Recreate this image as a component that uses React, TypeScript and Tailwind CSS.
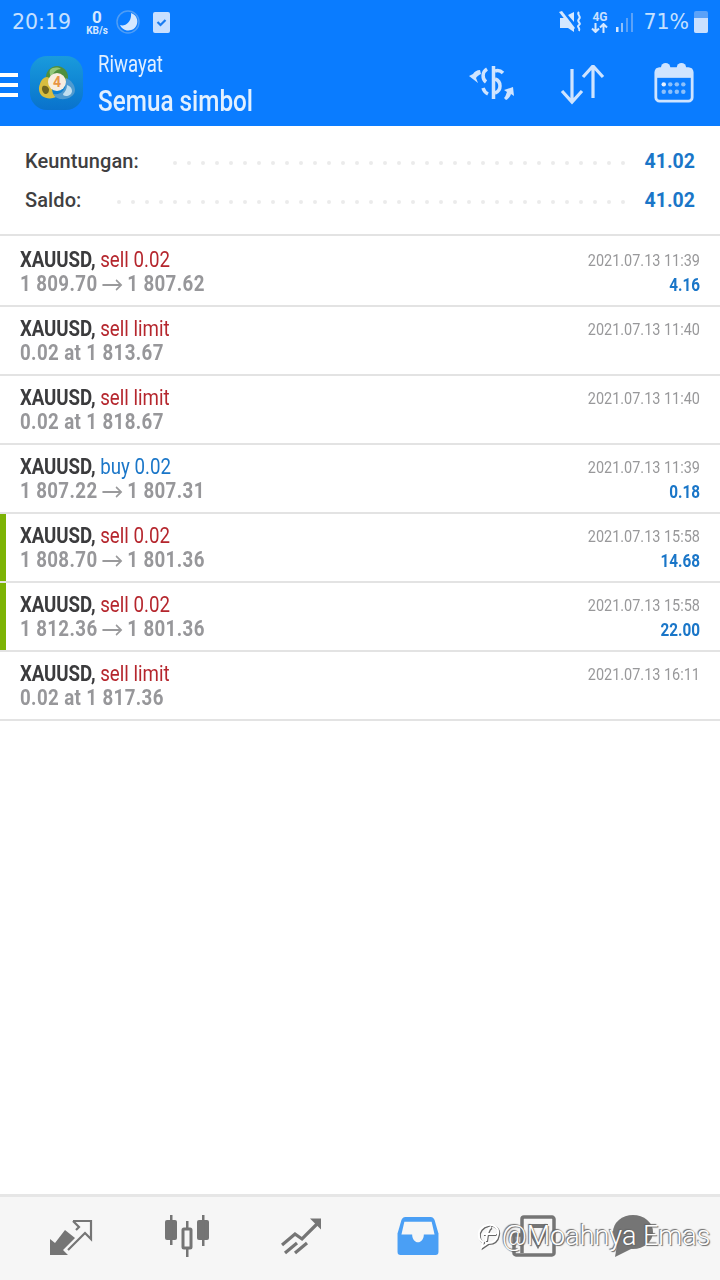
import React from "react";

const font = { fontFamily: "Roboto, sans-serif" };

type Row = { kind: string; kindColor: string; line2: string | string[]; time: string; profit?: string; mark?: boolean };

const Arrow = () => (
  <svg width="25" height="14" viewBox="0 0 25 14" className="inline-block mx-[5px] align-[-1px]" fill="none" stroke="#9a9a9c" strokeWidth="1.8">
    <path d="M1 7H23M17 2l6 5-6 5" />
  </svg>
);

const rows: Row[] = [
  { kind: "sell 0.02", kindColor: "text-[#b5262d]", line2: ["1 809.70", "1 807.62"], time: "2021.07.13 11:39", profit: "4.16" },
  { kind: "sell limit", kindColor: "text-[#b5262d]", line2: "0.02 at 1 813.67", time: "2021.07.13 11:40" },
  { kind: "sell limit", kindColor: "text-[#b5262d]", line2: "0.02 at 1 818.67", time: "2021.07.13 11:40" },
  { kind: "buy 0.02", kindColor: "text-[#1a76c8]", line2: ["1 807.22", "1 807.31"], time: "2021.07.13 11:39", profit: "0.18" },
  { kind: "sell 0.02", kindColor: "text-[#b5262d]", line2: ["1 808.70", "1 801.36"], time: "2021.07.13 15:58", profit: "14.68", mark: true },
  { kind: "sell 0.02", kindColor: "text-[#b5262d]", line2: ["1 812.36", "1 801.36"], time: "2021.07.13 15:58", profit: "22.00", mark: true },
  { kind: "sell limit", kindColor: "text-[#b5262d]", line2: "0.02 at 1 817.36", time: "2021.07.13 16:11" },
];

function TradeRow({ r, first }: { r: Row; first: boolean }) {
  return (
    <div className={`relative border-b-2 border-[#e3e3e3] pl-5 pr-5 flex justify-between ${first ? "h-[71px] pt-[12px]" : "h-[69px] pt-[10px]"}`}>
      {r.mark && <div className="absolute left-0 top-0 bottom-0 w-[6px] bg-[#7cb305]" />}
      <div className="origin-left scale-x-[0.85] whitespace-nowrap">
        <div className="text-[22px] leading-[24px] text-[#3b3b3d]">
          <span className="font-bold tracking-[-0.1px]">XAUUSD,</span> <span className={r.kindColor}>{r.kind}</span>
        </div>
        <div className="text-[22px] leading-[24px] font-bold text-[#97979a] tracking-[0.45px]">
          {Array.isArray(r.line2) ? (
            <>
              {r.line2[0]}
              <Arrow />
              {r.line2[1]}
            </>
          ) : (
            r.line2
          )}
        </div>
      </div>
      <div className="text-right whitespace-nowrap origin-right scale-x-[0.85]">
        <div className="text-[17px] leading-[22px] mt-[1px] text-[#98989a]">{r.time}</div>
        {r.profit && <div className="text-[18px] leading-[24px] font-bold text-[#1a76c8] mt-[2px]">{r.profit}</div>}
      </div>
    </div>
  );
}

function Dots() {
  return (
    <div className="flex-1 ml-[34px] mr-[20px] h-[4px] mt-[3px] overflow-hidden flex justify-end gap-[10px]">
      {Array.from({ length: 40 }).map((_, i) => (
        <span key={i} className="w-[4px] h-[4px] rounded-full bg-[#ebebeb] shrink-0" />
      ))}
    </div>
  );
}

function Logo() {
  return (
    <div className="w-[53px] h-[54px] rounded-[17px] bg-gradient-to-b from-[#1a9bdc] to-[#0a72cc] flex items-center justify-center shrink-0">
      <svg width="38" height="36" viewBox="0 0 38 36">
        <path d="M19 1c6 0 11 5 11 11 0 2-1 4-2 5H11c-2-1-3-3-3-5C8 6 13 1 19 1z" fill="#4f8f3e" />
        <path d="M12 5c3-3 8-3 11-1-4 0-8 3-9 8-2-1-3-4-2-7z" fill="#93c77a" />
        <path d="M9 12c4 1 6 5 5 11 0 4 1 7 4 9-4 2-10 2-14-1-3-3-4-8-2-12 1-4 4-7 7-7z" fill="#d8bd3f" />
        <path d="M5 21c2-1 5 0 6 3 0 3-1 5-4 5-3-2-4-6-2-8z" fill="#6f6520" />
        <path d="M28 13c5 2 9 7 9 12 0 6-7 10-15 9-4-1-6-3-6-5 6 1 13-3 12-16z" fill="#4f9bd0" />
        <path d="M29 20c3 1 5 3 5 6s-3 5-6 5c-2 0-3-1-3-2 2-2 4-5 4-9z" fill="#c0dff0" />
        <circle cx="19" cy="17" r="9" fill="#f7ede0" />
        <text x="19" y="22" textAnchor="middle" fontSize="14" fontWeight="700" fill="#e89445" fontFamily="Roboto, sans-serif">4</text>
      </svg>
    </div>
  );
}

export default function App() {
  return (
    <div className="w-[720px] h-[1280px] bg-white flex flex-col overflow-hidden" style={font}>
      <header className="h-[126px] bg-[#0a7cff] shrink-0 text-[#e2f0ff] relative">
        <div className="h-[44px] flex items-center justify-between pl-[12px] pr-[12px]">
          <div className="flex items-center">
            <span className="text-[20.5px] text-[#c5e0ff] w-[62px]" style={{ fontFamily: "'DejaVu Sans', sans-serif" }}>20:19</span>
            <div className="ml-[10px] flex flex-col items-center w-[26px] text-[#d5e8ff]">
              <span className="text-[17px] leading-[17px] font-bold">0</span>
              <span className="text-[10px] leading-[10px] font-bold">KB/s</span>
            </div>
            <svg width="24" height="24" viewBox="0 0 24 24" className="ml-[6px]">
              <circle cx="12" cy="12" r="11" fill="none" stroke="#4f9df5" strokeWidth="1.5" />
              <path d="M15 3a9 9 0 1 1-11 12c5 2 12-3 11-12z" fill="#d5e8ff" />
            </svg>
            <div className="ml-[13px] w-[17px] h-[21px] bg-[#c9e0ff] rounded-[2px] flex items-center justify-center">
              <svg width="13" height="13" viewBox="0 0 13 13" fill="none" stroke="#1a7cf0" strokeWidth="2.2"><path d="M2.500 6l3 3 5-5" /></svg>
            </div>
          </div>
          <div className="flex items-center text-[#c9e0ff]">
            <svg width="24" height="24" viewBox="0 0 24 24" fill="#d5e8ff" className="mr-[9px]">
              <path d="M2 8h4l1-1 9 11v4l-6-4H2z" />
              <path d="M10 5l6-3v10z" />
              <path d="M1 2l3-1 13 17-2 2z" fill="#d5e8ff" />
              <path d="M21 2c-3 3 3 4 0 7s3 4 0 6 2 3 0 6" fill="none" stroke="#d5e8ff" strokeWidth="2" />
            </svg>
            <div className="flex flex-col items-center w-[17px]">
              <span className="text-[12px] leading-[12px] font-bold">4G</span>
              <svg width="17" height="10" viewBox="0 0 17 10" fill="none" stroke="#d5e8ff" strokeWidth="2">
                <path d="M4.500 0v9M1 5.500l3.500 3.500L8 5.500M12.500 10V1M9 4.500L12.500 1 16 4.500" />
              </svg>
            </div>
            <svg width="20" height="22" viewBox="0 0 20 22" className="ml-[7px]">
              <rect x="1" y="16" width="2.500" height="5" fill="#d5e8ff" />
              <rect x="6" y="12" width="2" height="9" fill="#8fc0f8" />
              <rect x="11" y="7" width="2" height="14" fill="#5ba2f8" />
              <rect x="16" y="2" width="2" height="19" fill="#5ba2f8" />
            </svg>
            <span className="ml-[8px] text-[20.5px] text-[#c5e0ff]" style={{ fontFamily: "'DejaVu Sans', sans-serif" }}>71%</span>
            <div className="ml-[5px] w-[14px] h-[22px] relative rounded-[2px] overflow-hidden bg-[#5ba2f8] mt-[-1px]">
              <div className="absolute bottom-0 left-0 right-0 h-[15px] bg-[#c9e0ff]" />
            </div>
          </div>
        </div>
        <div className="h-[82px] flex items-start relative">
          <div className="mt-[29px] w-[18px] flex flex-col gap-[6px] shrink-0">
            <span className="h-[4px] bg-white block" />
            <span className="h-[4px] bg-white block" />
            <span className="h-[4px] bg-white block" />
          </div>
          <div className="ml-[12px] mt-[12px]"><Logo /></div>
          <div className="ml-[15px] mt-[6px] origin-left scale-x-[0.81] whitespace-nowrap">
            <div className="text-[23px] leading-[30px]">Riwayat</div>
            <div className="text-[30px] leading-[42px] font-medium">Semua simbol</div>
          </div>
          <div className="ml-auto flex items-start text-[#cfe4ff]">
            <svg width="60" height="55" viewBox="0 0 60 55" className="mr-[36px] mt-[11px]" fill="none" stroke="#cfe4ff">
              <path d="M29.500 11V44" strokeWidth="3.500" />
              <path d="M31 16c3-1 6 0 8 2" strokeWidth="3.500" />
              <path d="M23 14c-5 3-5 10-1 13" strokeWidth="3.500" />
              <path d="M19 33c1 3 3 5 5 6" strokeWidth="3.500" />
              <path d="M31 24c3 1 5 3 5 7s-2 6-5 7" strokeWidth="3.500" />
              <path d="M5 21l4-2c1-2 4-4 7-4l1 4c-2 1-4 2-5 4l2 5z" fill="#cfe4ff" stroke="none" />
              <path d="M40 43c2-2 2-4 3-6l-3-2 9-3 1 9-3-2c-1 3-3 5-5 6z" fill="#cfe4ff" stroke="none" />
            </svg>
            <svg width="46" height="40" viewBox="0 0 46 40" className="mr-[48px] mt-[21px]" fill="none" stroke="#cfe4ff" strokeWidth="3.200">
              <path d="M12 4v33M2 26l10 11 10-11" />
              <path d="M33 33V1M23 12L33 1l10 11" />
            </svg>
            <svg width="40" height="41" viewBox="0 0 42 44" className="mr-[26px] mt-[18px]">
              <rect x="1.500" y="7" width="39" height="35" rx="4" fill="none" stroke="#cfe4ff" strokeWidth="3" />
              <rect x="1.500" y="7" width="39" height="10" fill="#cfe4ff" />
              <circle cx="12" cy="6" r="5" fill="#cfe4ff" />
              <circle cx="29" cy="6" r="5" fill="#cfe4ff" />
              {[10, 17, 24, 31].map((x) => (
                <React.Fragment key={x}>
                  <circle cx={x} cy="24" r="2.400" fill={x === 10 ? "#e6f1ff" : "#8cc0fb"} />
                  <circle cx={x} cy="32" r="2.400" fill="#8cc0fb" />
                </React.Fragment>
              ))}
            </svg>
          </div>
        </div>
      </header>

      <section className="h-[110px] border-b-2 border-[#e3e3e3] pl-[25px] pr-[25px] pt-[23px] shrink-0">
        <div className="h-[24px] flex items-center text-[20px]">
          <span className="font-medium text-[#3f3f41] tracking-[0.1px]">Keuntungan:</span>
          <Dots />
          <span className="font-bold text-[#1a76c8] text-[19.5px] mt-[1px]">41.02</span>
        </div>
        <div className="h-[24px] flex items-center text-[20px] mt-[15px]">
          <span className="font-medium text-[#3f3f41] tracking-[0.1px]">Saldo:</span>
          <Dots />
          <span className="font-bold text-[#1a76c8] text-[19.5px] mt-[1px]">41.02</span>
        </div>
      </section>

      <main className="flex-1">
        {rows.map((r, i) => (
          <TradeRow key={i} r={r} first={i === 0} />
        ))}
      </main>

      <footer className="h-[86px] shrink-0 border-t-[3px] border-[#e6e6e6] bg-[#f6f6f6] relative flex items-start">
        <svg width="44" height="38" viewBox="0 0 44 38" className="absolute left-[50px] top-[21px]">
          <path d="M0 37V21l5 4L15 12l10 8L13 32l5 5z" fill="#757575" />
          <path d="M23 3h18v18l-6-6-17 17M23 3l6 6-3 3" fill="none" stroke="#757575" strokeWidth="2.200" />
        </svg>
        <svg width="46" height="44" viewBox="0 0 46 44" className="absolute left-[164px] top-[18px]">
          <rect x="1" y="5" width="12" height="20" rx="2" fill="#757575" />
          <rect x="6" y="0" width="2.500" height="30" fill="#757575" />
          <rect x="33" y="5" width="12" height="20" rx="2" fill="#757575" />
          <rect x="38" y="0" width="2.500" height="31" fill="#757575" />
          <rect x="19" y="14" width="8" height="19" rx="1" fill="none" stroke="#757575" strokeWidth="3" />
          <rect x="22" y="6" width="2.500" height="8" fill="#757575" />
          <rect x="22" y="33" width="2.500" height="9" fill="#757575" />
        </svg>
        <svg width="42" height="40" viewBox="0 0 42 40" className="absolute left-[281px] top-[20px]" fill="none" stroke="#757575" strokeWidth="3.200">
          <path d="M1 28l13-11 7 5L38 5" />
          <path d="M29 1.500h11v11z" fill="#757575" stroke="none" />
          <path d="M4 36l12-10M14 36l12-10" />
        </svg>
        <svg width="42" height="38" viewBox="0 0 42 39" className="absolute left-[397px] top-[20px]">
          <path d="M8 0h26c2 0 3 1 4 3l4 14v19c0 2-1 3-3 3H3c-2 0-3-1-3-3V17L4 3c1-2 2-3 4-3z" fill="#4a9ff5" />
          <path d="M7 5h28l3 13H27c0 5-3 8-6 8s-6-3-6-8H4z" fill="#f6f6f6" />
        </svg>
        <svg width="44" height="42" viewBox="0 0 44 42" className="absolute left-[512px] top-[18px]" fill="none" stroke="#757575" strokeWidth="3.500">
          <path d="M10 38V4c0-1.500 1-2 2-2h28c1 0 2 1 2 2v34c0 1-1 2-2 2H4c-1 0-2-1-2-2V20h8" />
          <path d="M17 11h19" strokeWidth="4" />
          <path d="M18 16l8 15 8-15" strokeWidth="3" />
        </svg>
        <svg width="42" height="42" viewBox="0 0 42 42" className="absolute left-[612px] top-[18px]">
          <ellipse cx="21" cy="17" rx="20" ry="17" fill="#757575" />
          <path d="M6 24L3 42l18-9z" fill="#757575" />
        </svg>
        <div
          className="absolute left-[477px] top-[21px] text-[27px] leading-[36px] font-light text-white whitespace-nowrap flex items-center"
          style={{ textShadow: "1px 1px 1px #666, -1px -1px 1px #666" }}
        >
          <svg width="24" height="28" viewBox="0 0 24 28" fill="none" stroke="#fff" strokeWidth="2" className="mr-[1px]" style={{ filter: "drop-shadow(1px 1px 0 #666)" }}>
            <path d="M21 12c1-6-4-10-10-9C5 4 1 9 2 14c0 3 2 5 4 6l-1 5 6-4c5 0 9-3 10-9z" />
            <path d="M6 12h13M14 5c-3 1-4 5-5 14" />
          </svg>
          @Moahnya Emas
        </div>
      </footer>
    </div>
  );
}
